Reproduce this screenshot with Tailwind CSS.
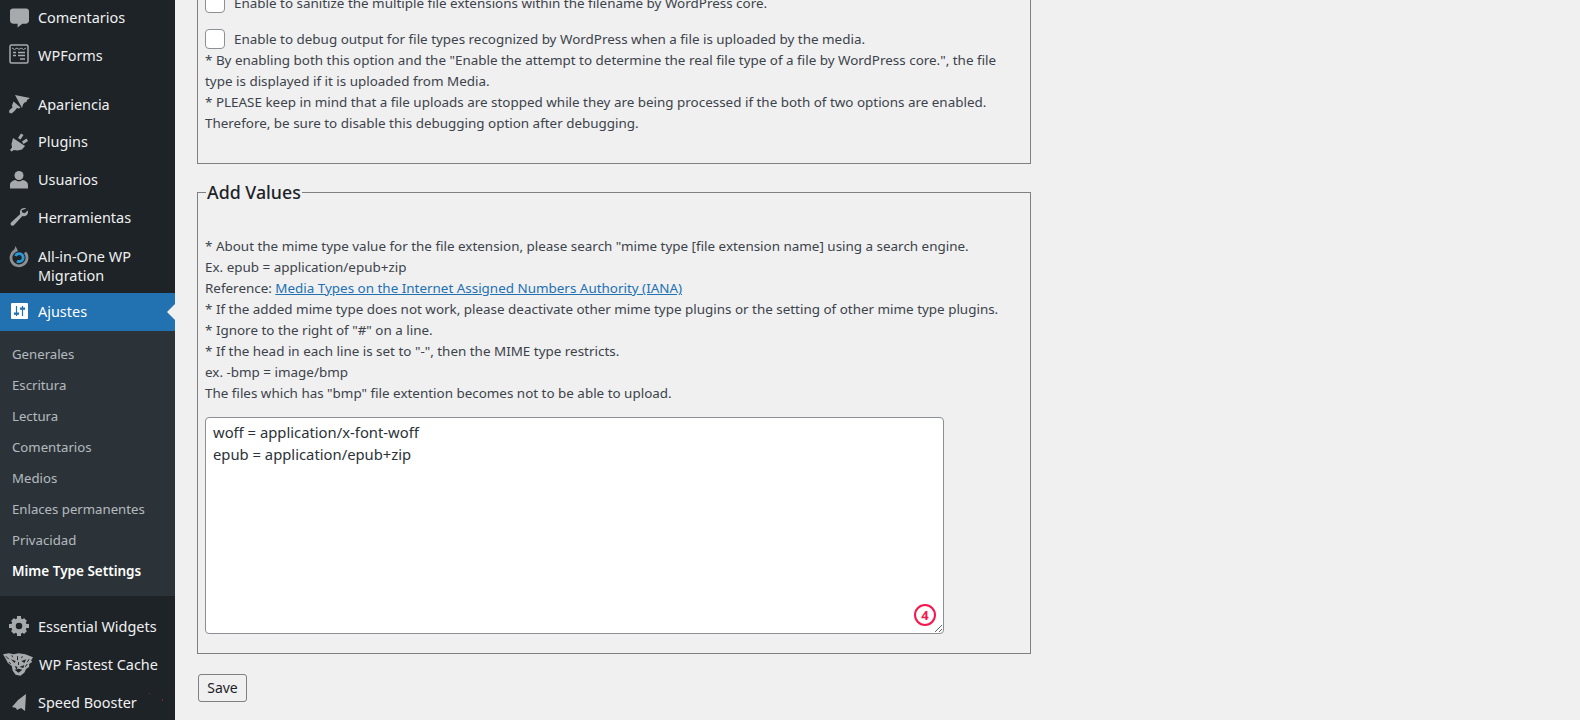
<!DOCTYPE html>
<html lang="es">
<head>
    <meta charset="UTF-8">
    <meta name="viewport" content="width=device-width, initial-scale=1.0">
    <script src="https://cdn.jsdelivr.net/npm/@tailwindcss/browser@4"></script>
    <title>Mime Type Settings</title>
</head>
<body class="bg-[#f0f0f1] overflow-hidden font-['Noto_Sans',sans-serif] text-[13.43px] text-[#3c434a]">
<div class="flex h-[720px] overflow-hidden">

    <!-- sidebar -->
    <aside class="w-[175px] shrink-0 bg-[#1d2327] text-[14.45px] text-[#f0f0f1]">
        <a class="flex items-center h-[37px]">
            <svg class="ml-[10px] -mt-[2px] w-[19px] h-[20px] fill-[#a7aaad]" viewBox="0 0 20 20"><path d="M3 0h14c1.500 0 3 1 3 3v10c0 1.500-1.500 3-3 3h-4l-5 4v-4H3c-1.500 0-3-1.500-3-3V3c0-2 1.500-3 3-3z"/></svg>
            <span class="ml-[9px] -mt-[1px]">Comentarios</span>
        </a>
        <a class="flex items-center h-[38px]">
            <svg class="ml-[9px] -mt-[4px] w-[20px] h-[20px]" viewBox="0 0 20 20" fill="none" stroke="#a7aaad"><rect x="1" y="1" width="18" height="18" rx="1.500" stroke-width="1.500"/><path d="M3 4l2.500 1.500L8 4l2 1.500L12 4l2.500 1.500L17 4" stroke-width="1"/><path d="M4 8.500h3M9 8.500h7M4 11.500h3M9 11.500h7M11 15h5" stroke-width="1.500"/></svg>
            <span class="ml-[9px] -mt-[1px]">WPForms</span>
        </a>
        <div class="h-[11px]"></div>
        <a class="flex items-center h-[38px]">
            <svg class="ml-[9px] -mt-[2px] w-[21px] h-[20px] fill-[#a7aaad]" viewBox="0 0 21 20"><path d="M6 1l15 3-3 2-.5 2-2 .5-1.500 2-1 3.500z"/><path d="M4.500 7.500l7 6-1.500 1-2-.5-2.500 3L2.500 19.500 0 18.500l.5-2.500 3-2.500-.5-2z"/></svg>
            <span class="ml-[8px] -mt-[1px]">Apariencia</span>
        </a>
        <a class="flex items-center h-[38px]">
            <svg class="ml-[10px] -mt-[2px] w-[19px] h-[20px] fill-[#a7aaad]" viewBox="0 0 19 20"><path d="M11 1.500l2.500 1.500-3 4.500-2.500-1.500z"/><path d="M16.500 6.500l1.500 2.500-4.500 3-1.500-2.500z"/><path d="M3 6l12 8-3 3.500-4.500 1-3.500-.5L1.500 19.500 0 18l2-2.500-.5-3.500z"/></svg>
            <span class="ml-[9px] -mt-[2px]">Plugins</span>
        </a>
        <a class="flex items-center h-[37px]">
            <svg class="ml-[10px] -mt-[2px] w-[18px] h-[19px] fill-[#a7aaad]" viewBox="0 0 20 20"><circle cx="10" cy="5.500" r="5"/><path d="M0 20v-4c0-3 3-5 6-5.500 1 1 2.500 1.500 4 1.500s3-.5 4-1.500c3 .5 6 2.500 6 5.500v4z"/></svg>
            <span class="ml-[10px] -mt-[2px]">Usuarios</span>
        </a>
        <a class="flex items-center h-[38px]">
            <svg class="ml-[9px] -mt-[2px] w-[20px] h-[20px] fill-[#a7aaad]" viewBox="0 0 20 20"><path d="M17.500 1.500c-2-1.200-5-.6-6 1.500-.7 1.300-.7 2.700-.2 3.900l-9 8.300c-1 1-.9 2.200-.2 3 .8.800 2 .8 3-.2l8.300-9c1.500.5 3 .2 4.200-.8 1.300-1.200 1.800-3 1.100-4.700l-3 2.800-2.500-.7-.6-2.400z"/></svg>
            <span class="ml-[9px] -mt-[1px]">Herramientas</span>
        </a>
        <a class="flex h-[56px] pt-[7px]">
            <svg class="ml-[9px] mt-[2px] w-[20px] h-[22px] shrink-0" viewBox="0 0 20 22" fill="none"><path d="M7.500 4.200a8 8 0 1 0 8.500 2.300" stroke="#8c8f94" stroke-width="2.800"/><path d="M6.500 0l2.500 5-4.500 1z" fill="#8c8f94"/><path d="M6.500 10a4 4 0 1 1 1.500 5" stroke="#2a9ad6" stroke-width="2.800"/></svg>
            <span class="ml-[9px] leading-[19px] mt-[3px]">All-in-One WP<br>Migration</span>
        </a>

        <a class="relative flex items-center h-[38px] bg-[#2271b1] text-white">
            <svg class="ml-[11px] -mt-[2px] w-[17px] h-[16px]" viewBox="0 0 17 16"><rect width="17" height="16" rx="1" fill="#fff"/><path d="M5.500 3v10M3.500 10h4v1.200h-4zM11.500 3v10M9.500 5h4v1.200h-4z" stroke="#2271b1" stroke-width="1.200" fill="#2271b1"/></svg>
            <span class="ml-[10px]">Ajustes</span>
            <span class="absolute right-0 top-[11px] border-y-[8px] border-r-[8px] border-y-transparent border-r-[#f0f0f1]"></span>
        </a>
        <div class="bg-[#2c3338] h-[265px] pt-[8px] text-[13.2px] text-[#f0f6fc]/70">
            <a class="flex items-center h-[31px] pl-[12px]">Generales</a>
            <a class="flex items-center h-[31px] pl-[12px]">Escritura</a>
            <a class="flex items-center h-[31px] pl-[12px]">Lectura</a>
            <a class="flex items-center h-[31px] pl-[12px]">Comentarios</a>
            <a class="flex items-center h-[31px] pl-[12px]">Medios</a>
            <a class="flex items-center h-[31px] pl-[12px]">Enlaces permanentes</a>
            <a class="flex items-center h-[31px] pl-[12px]">Privacidad</a>
            <a class="flex items-center h-[31px] pl-[12px] font-semibold text-[13.5px] text-white">Mime Type Settings</a>
        </div>

        <a class="flex items-center h-[38px] mt-[12px]">
            <svg class="ml-[9px] -mt-[2px] w-[20px] h-[20px]" viewBox="0 0 20 20" fill="#a7aaad"><circle cx="10" cy="10" r="5.500" fill="none" stroke="#a7aaad" stroke-width="4.500"/><path d="M8 0h4v4H8zM8 16h4v4H8zM0 8h4v4H0zM16 8h4v4h-4zM2 5l3-3 3 3-3 3zM12 15l3-3 3 3-3 3zM2 15l3-3 3 3-3 3zM12 5l3-3 3 3-3 3z"/></svg>
            <span class="ml-[9px] -mt-[1px]">Essential Widgets</span>
        </a>
        <a class="flex items-center h-[38px]">
            <svg class="ml-[3px] -mt-[2px] w-[31px] h-[24px] shrink-0" viewBox="0 0 32 24"><path d="M0 2l6-1 5 1 5-1 7 1 8 3-2 3 1 2-3 2 0 3-3 2-2 4-4 3-5-1-3-4-1-5-4-3-2-4z" fill="#a7aaad"/><path d="M8 7l5 2-1 2zM19 9l5-2-2 4zM12 14l3 1-1 3zM17 15l5-2-1 3zM12 18l4 3 4-3-4-1z" fill="#1d2327"/><path d="M3 4l3 3M25 10l2-3M6 10l2 2M23 15l2-3M9 3l1 2M20 4l-1 2M15 4v4M16 10v3" stroke="#1d2327" stroke-width="1" fill="none"/></svg>
            <span class="ml-[5px] -mt-[1px]">WP Fastest Cache</span>
        </a>
        <a class="relative flex items-center h-[38px]">
            <svg class="ml-[12px] -mt-[2px] w-[14px] h-[17px] fill-[#a7aaad]" viewBox="0 0 14 17"><path d="M14 0l-1 17-4-3-4 2-1-2-4-1 6-7z"/></svg>
            <span class="ml-[12px] -mt-[1px]">Speed Booster</span>
            <span class="absolute left-[149px] top-[9px] w-[1px] h-[1px] bg-[#7a2a35]"></span>
            <span class="absolute left-[162px] top-[15px] w-[1px] h-[2px] bg-[#7a2a35]"></span>
        </a>
    </aside>

    <!-- content -->
    <main class="flex-1 pl-[22px] -mt-[31px]">
        <div class="w-[834px]">
            <fieldset class="h-[195px] border border-[#808080] px-[7px]">
                <div class="flex items-center h-[28px] mt-[19px]">
                    <span class="w-[20px] h-[20px] rounded-[4px] bg-white border border-[#8c8f94]"></span>
                    <span class="ml-[9px]">Enable to sanitize the multiple file extensions within the filename by WordPress core.</span>
                </div>
                <div class="flex items-center h-[22px] mt-[11px]">
                    <span class="w-[20px] h-[20px] rounded-[4px] bg-white border border-[#8c8f94]"></span>
                    <span class="ml-[9px]">Enable to debug output for file types recognized by WordPress when a file is uploaded by the media.</span>
                </div>
                <p class="leading-[21px]">* By enabling both this option and the "Enable the attempt to determine the real file type of a file by WordPress core.", the file<br>type is displayed if it is uploaded from Media.<br>* PLEASE keep in mind that a file uploads are stopped while they are being processed if the both of two options are enabled.<br>Therefore, be sure to disable this debugging option after debugging.</p>
            </fieldset>

            <fieldset class="mt-[17px] h-[473px] border border-[#808080] px-[7px]">
                <legend class="ml-[1px] px-[1px] text-[17.8px] font-medium text-[#1d2327] leading-[22px]">Add Values</legend>
                <p class="mt-[33px] leading-[21px]">* About the mime type value for the file extension, please search "mime type [file extension name] using a search engine.<br>Ex. epub = application/epub+zip<br>Reference: <a class="text-[#2271b1] underline">Media Types on the Internet Assigned Numbers Authority (IANA)</a><br>* If the added mime type does not work, please deactivate other mime type plugins or the setting of other mime type plugins.<br>* Ignore to the right of "#" on a line.<br>* If the head in each line is set to "-", then the MIME type restricts.<br>ex. -bmp = image/bmp<br>The files which has "bmp" file extention becomes not to be able to upload.</p>
                <div class="relative mt-[13px] w-[739px] h-[217px]">
                    <textarea class="block w-full h-full bg-white border border-[#8c8f94] rounded-[4px] px-[7px] py-[3px] text-[14.8px] leading-[22px] text-[#2c3338] outline-none">woff = application/x-font-woff
epub = application/epub+zip</textarea>
                    <span class="absolute right-[8px] bottom-[8px] w-[22px] h-[22px] rounded-full border-2 border-[#f5174d] bg-white flex items-center justify-center text-[13px] font-bold text-[#f5174d] leading-none">4</span>
                </div>
            </fieldset>

            <button class="mt-[20px] ml-[1px] w-[49px] h-[28px] bg-[#f0f0f1] border border-[#808080] rounded-[3px] text-[14px] text-[#1d2327] leading-none">Save</button>
        </div>
    </main>
</div>
</body>
</html>
